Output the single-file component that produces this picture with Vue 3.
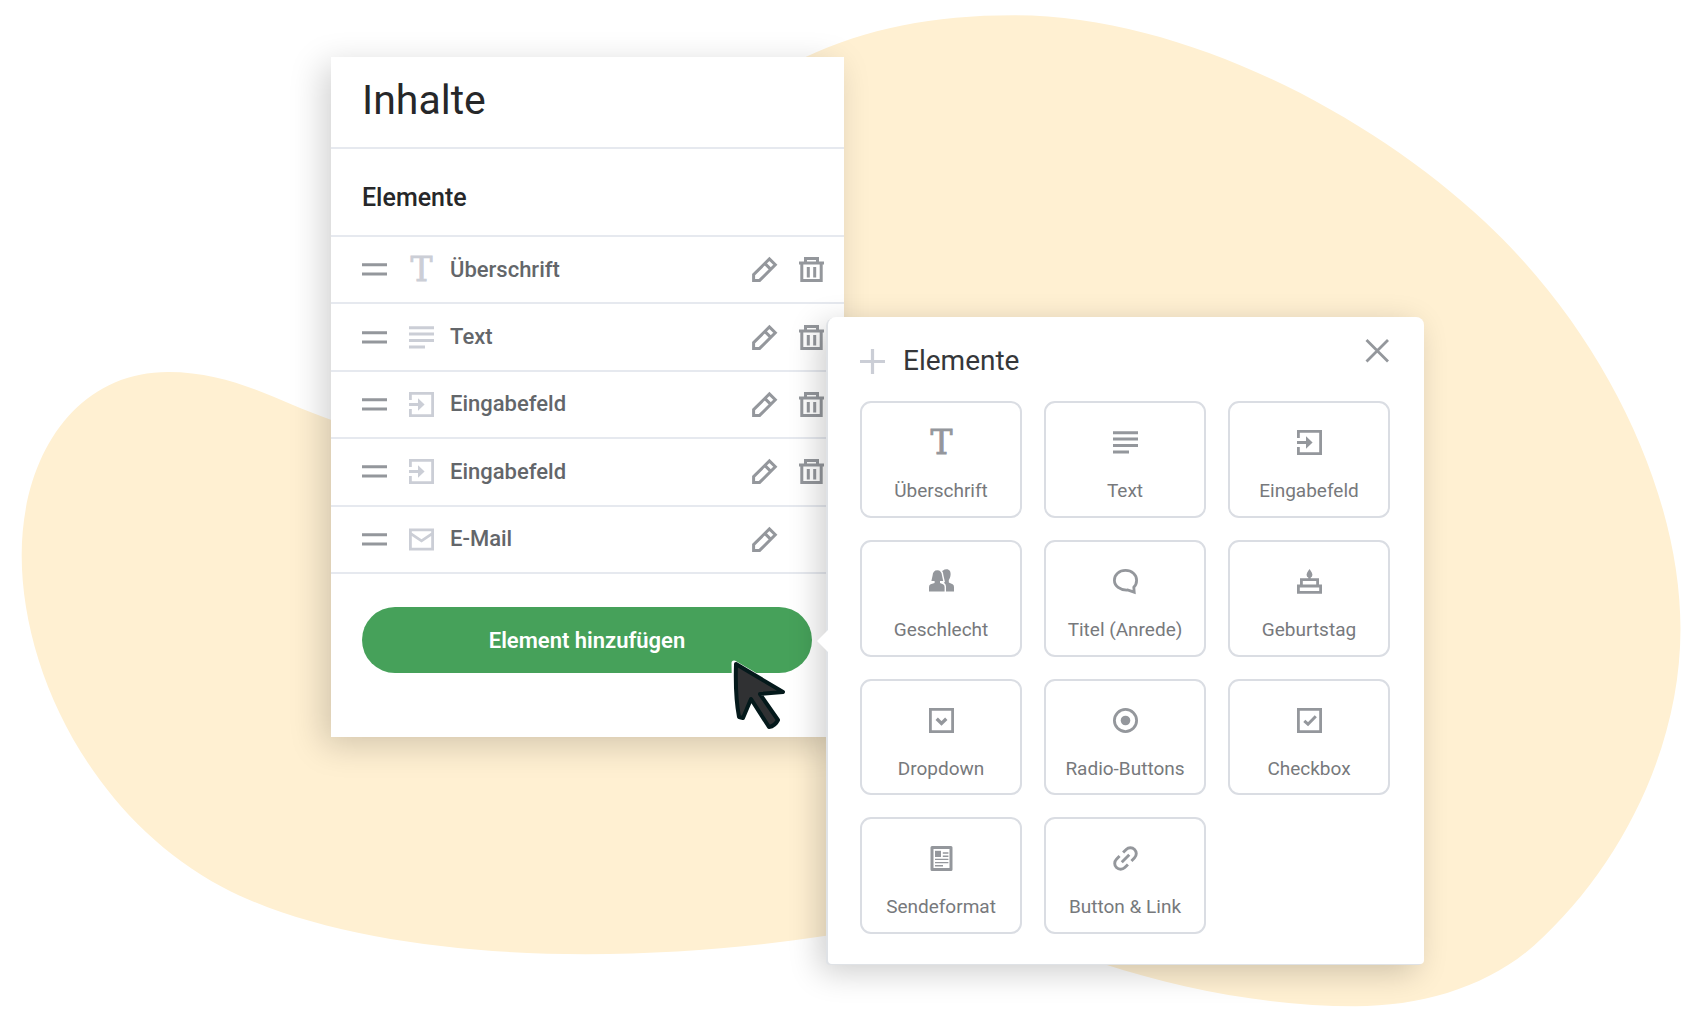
<template>
  <div class="stage">
    <svg class="blob" viewBox="0 0 1568 937" preserveAspectRatio="none" aria-hidden="true">
      <path d="M935 14C1090 14 1262 104 1370 205C1480 308 1550 455 1550 580C1550 690 1495 800 1415 872C1372 910 1312 928 1250 928C1170 928 1090 912 1018 889C940 862 850 850 762 863C690 874 620 880 540 880C420 880 290 863 205 818C85 754 20 620 20 512C20 420 70 343 155 343C215 343 255 370 305 387C440 430 560 130 742 53C800 26 860 14 935 14Z" />
    </svg>

    <div class="editor">
      <section class="panel">
        <header class="panel-header">
          <h1>Inhalte</h1>
        </header>
        <h2 class="panel-section">Elemente</h2>

        <ul class="element-list">
          <li v-for="item in items" :key="item.id" class="element-row">
            <button class="icon-btn" aria-label="Verschieben">
              <svg class="icon" viewBox="0 0 25 25" v-html="icons.handle"></svg>
            </button>
            <svg class="icon icon-light" viewBox="0 0 25 25" v-html="icons[item.icon]"></svg>
            <span class="element-name">{{ item.name }}</span>
            <button class="icon-btn" aria-label="Bearbeiten">
              <svg class="icon" viewBox="0 0 25 25" v-html="icons.pencil"></svg>
            </button>
            <button v-if="item.removable" class="icon-btn" aria-label="Löschen" @click="removeItem(item.id)">
              <svg class="icon" viewBox="0 0 25 25" v-html="icons.trash"></svg>
            </button>
          </li>
        </ul>

        <div class="panel-footer">
          <button class="add-btn" @click="open = true">Element hinzufügen</button>
        </div>
      </section>

      <section v-if="open" class="popover">
        <header class="popover-header">
          <svg class="icon icon-light" viewBox="0 0 25 25" v-html="icons.plus"></svg>
          <h2>Elemente</h2>
          <button class="icon-btn close-btn" aria-label="Schließen" @click="open = false">
            <svg class="icon" viewBox="0 0 25 25" v-html="icons.close"></svg>
          </button>
        </header>
        <div class="tiles">
          <button v-for="type in types" :key="type.name" class="tile" @click="addItem(type)">
            <svg class="icon" viewBox="0 0 25 25" v-html="icons[type.icon]"></svg>
            <span>{{ type.name }}</span>
          </button>
        </div>
      </section>

      <svg class="cursor" viewBox="0 0 56 72" aria-hidden="true">
        <path class="cursor-halo" d="M4 5L52 33L29 36L48 61Q45 68 38 69L21 41L12 60L8 59Q4 38 4 5Z" />
        <path class="cursor-body" d="M6 6L53 34L30 36L48 62Q45 68 39 69L21 41L13 60L9 59Q5 38 6 6Z" />
      </svg>
    </div>
  </div>
</template>

<script setup>
import { ref } from 'vue'

const open = ref(true)

const items = ref([
  { id: 1, name: 'Überschrift', icon: 'heading', removable: true },
  { id: 2, name: 'Text', icon: 'text', removable: true },
  { id: 3, name: 'Eingabefeld', icon: 'input', removable: true },
  { id: 4, name: 'Eingabefeld', icon: 'input', removable: true },
  { id: 5, name: 'E-Mail', icon: 'mail', removable: false }
])

const types = [
  { name: 'Überschrift', icon: 'heading' },
  { name: 'Text', icon: 'text' },
  { name: 'Eingabefeld', icon: 'input' },
  { name: 'Geschlecht', icon: 'people' },
  { name: 'Titel (Anrede)', icon: 'bubble' },
  { name: 'Geburtstag', icon: 'cake' },
  { name: 'Dropdown', icon: 'dropdown' },
  { name: 'Radio-Buttons', icon: 'radio' },
  { name: 'Checkbox', icon: 'checkbox' },
  { name: 'Sendeformat', icon: 'format' },
  { name: 'Button & Link', icon: 'link' }
]

const line = (d, width = 2.8, extra = '') =>
  `<path d="${d}" fill="none" stroke="currentColor" stroke-width="${width}" ${extra}/>`
const fill = (d) => `<path d="${d}" fill="currentColor"/>`

const icons = {
  handle: fill('M0 6.2H25V9.2H0ZM0 15.6H25V18.6H0Z'),
  heading: '<text x="12.5" y="24.4" text-anchor="middle" font-family="DejaVu Serif, serif" font-size="33" fill="currentColor" stroke="currentColor" stroke-width="0.8">T</text>',
  text: fill('M0 1.2H25V4.2H0ZM0 7.6H25V10.6H0ZM0 14H25V17H0ZM0 20.4H16V23.4H0Z'),
  input: line('M1.4 8V1.4H23.6V23.6H1.4V17M0 12.5H11') + fill('M9 6.3L15.6 12.5L9 18.7Z'),
  mail: line('M1.4 2.8H23.6V22.2H1.4ZM1.4 6.4L12.5 13.8L23.6 6.4'),
  pencil: line('M1.6 17.6L17.4 1.9L23.3 7.8L7.6 23.4H1.6ZM12.8 6.4L18.8 12.4', 3),
  trash: line('M6.5 6V1.5H18.5V6M0 6H25M2.8 6V23.6H22.2V6', 3) + line('M9.3 10V20.5M15.7 10V20.5', 3),
  plus: line('M0 12.5H25M12.5 0V25', 3.2),
  close: line('M1.5 1L23 22.5M23 1L1.5 22.5', 2.8),
  people: fill('M8.3 1.2C11.2 1.2 12.8 3.2 13 6.5L14.2 12H11V14L14 15.2Q15.6 16 15.6 18V22.4H0V18Q0 16 1.6 15.2L5.6 14V12H2.4L3.6 6.5C3.8 3.2 5.4 1.2 8.3 1.2Z') +
    fill('M14 1.4Q15.4 .3 17.5 .3C20.6 .3 21.8 2.6 21.6 5.6C21.5 8.2 20.6 10 19.8 11V13.6L23.6 15.2Q25 16 25 18V22.4H17V17.6Q17 15 15.2 14L14.9 13.3H16L14.4 6.2Q14.3 3.4 13.1 2.1Z'),
  bubble: line('M12.5 1.4C18.8 1.4 23.6 5.6 23.6 11.2C23.6 14.2 22.6 16.4 20.8 18.2L21.2 23.2L14.5 21C7 21.4 1.4 17 1.4 11.2C1.4 5.6 6.2 1.4 12.5 1.4Z'),
  cake: line('M1.4 17H23.6V23.4H1.4ZM4.4 17V10.6H20.6V17') + fill('M12.5 0Q15.6 4.2 15.4 6Q15.2 8 13.7 8.6V10H11.3V8.6Q9.8 8 9.6 6Q9.4 4.2 12.5 0Z'),
  dropdown: line('M1.4 1.4H23.6V23.6H1.4Z') + line('M7.7 10.8L12.5 15.4L17.3 10.8', 3.4),
  radio: line('M12.5 1.4A11.1 11.1 0 1 1 12.5 23.6A11.1 11.1 0 1 1 12.5 1.4Z') + '<circle cx="12.5" cy="12.5" r="4.8" fill="currentColor"/>',
  checkbox: line('M1.4 1.4H23.6V23.6H1.4Z') + line('M7.3 12.8L11 16.2L18.8 8.2', 3),
  format: line('M3 1.5H22V23.5H3Z', 3, 'stroke-linejoin="round"') + fill('M6 4.8H12V11H6Z') +
    line('M13.8 7H19.4M13.8 10.3H19.4M6 13.4H19.4M6 16.6H19.4M6 19.8H14', 1.4),
  link: `<g transform="rotate(-45 12.5 12.5)">${line('M10 6.6H5.6a5.9 5.9 0 0 0 0 11.8H10M15 6.6H19.4a5.9 5.9 0 0 1 0 11.8H15M7.2 12.5H17.8', 2.9)}</g>`
}

const removeItem = (id) => {
  items.value = items.value.filter(item => item.id !== id)
}

const addItem = (type) => {
  items.value.push({ id: Date.now(), name: type.name, icon: type.icon, removable: true })
}
</script>

<style>
body {
  background: #ffffff;
}
</style>

<style scoped>
.stage {
  position: relative;
  display: grid;
  grid-template-columns: 331fr 513fr 856fr;
  align-items: start;
  box-sizing: border-box;
  min-height: 100vh;
  padding: 57px 0 40px;
  font-family: Roboto, 'Liberation Sans', sans-serif;
}

.blob {
  position: absolute;
  inset: 0;
  width: 100%;
  height: 100%;
  fill: #fff0d2;
}

.editor {
  position: relative;
  grid-column: 2;
}

h1, h2 {
  margin: 0;
}

.panel {
  background: #ffffff;
  box-shadow: -8px 8px 32px rgba(0, 0, 0, 0.18);
}

.panel-header {
  padding: 19px 31px 23px;
  border-bottom: 2px solid #e6e9ef;
}

.panel-header h1 {
  font-size: 41px;
  font-weight: 400;
  line-height: 48px;
  color: #262729;
}

.panel-section {
  padding: 33px 31px 21px;
  border-bottom: 2px solid #e6e9ef;
  font-size: 25px;
  font-weight: 500;
  line-height: 32px;
  color: #262729;
}

.element-list {
  display: grid;
  grid-auto-rows: 1fr;
  min-height: 337px;
  margin: 0;
  padding: 0;
  list-style: none;
}

.element-row {
  display: grid;
  grid-template-columns: 25px 25px 1fr 25px 25px;
  column-gap: 22px;
  align-items: center;
  padding: 0 20px 0 31px;
  border-bottom: 2px solid #e6e9ef;
}

.element-name {
  margin-left: -6px;
  font-size: 22px;
  font-weight: 500;
  line-height: 28px;
  color: #63666a;
}

.icon {
  display: block;
  width: 25px;
  height: 25px;
  overflow: visible;
  color: #94979c;
}

.icon-light {
  color: #cbced6;
}

.icon-btn {
  padding: 0;
  border: none;
  background: none;
  cursor: pointer;
}

.panel-footer {
  padding: 33px 32px 64px 31px;
}

.add-btn {
  display: block;
  width: 100%;
  height: 66px;
  border: none;
  border-radius: 33px;
  background: #46a15a;
  color: #ffffff;
  font-family: inherit;
  font-size: 22px;
  font-weight: 600;
  cursor: pointer;
}

.popover {
  position: absolute;
  top: 260px;
  left: calc(100% - 16px);
  box-sizing: border-box;
  width: 596px;
  padding: 28px 34px 30px 32px;
  border-radius: 8px 8px 4px 4px;
  background: #ffffff;
  box-shadow: -2px 1px 0 #dfe2e6, -8px 8px 32px rgba(0, 0, 0, 0.2);
}

.popover::before {
  content: '';
  position: absolute;
  top: 313px;
  left: -11px;
  border: 11px solid transparent;
  border-left: none;
  border-right-color: #ffffff;
}

.popover-header {
  display: flex;
  align-items: center;
  gap: 18px;
  margin-bottom: 24px;
}

.popover-header h2 {
  flex: 1;
  font-size: 28px;
  font-weight: 400;
  line-height: 32px;
  color: #35373a;
}

.close-btn {
  align-self: flex-start;
  margin-top: -6px;
}

.tiles {
  display: grid;
  grid-template-columns: repeat(3, 1fr);
  grid-auto-rows: 1fr;
  gap: 22px;
  min-height: 533px;
}

.tile {
  display: flex;
  flex-direction: column;
  align-items: center;
  gap: 24px;
  padding: 27px 0 0;
  border: 2px solid #dadde3;
  border-radius: 11px;
  background: #ffffff;
  color: #77797c;
  font-family: inherit;
  font-size: 19px;
  line-height: 24px;
  cursor: pointer;
}

.cursor {
  position: absolute;
  top: 601px;
  left: 399px;
  width: 56px;
  height: 72px;
}

.cursor-halo {
  fill: #ffffff;
  stroke: #ffffff;
  stroke-width: 5;
  stroke-linejoin: round;
}

.cursor-body {
  fill: #303133;
  stroke: #04191b;
  stroke-width: 4;
  stroke-linejoin: round;
}
</style>
